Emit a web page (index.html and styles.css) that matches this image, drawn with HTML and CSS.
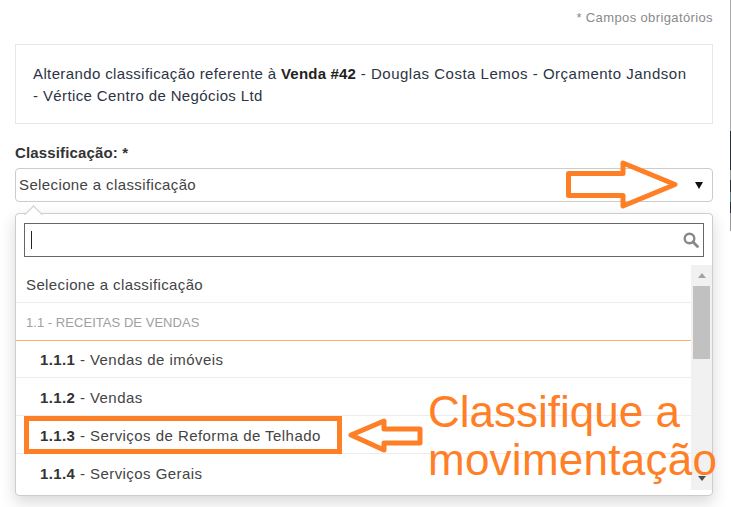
FILE: index.html
```html
<!DOCTYPE html>
<html lang="pt-BR">
<head>
<meta charset="utf-8">
<title>Alterar classificação</title>
<link rel="stylesheet" href="styles.css">
</head>
<body>
<main class="modal">
  <p class="required">* Campos obrigatórios</p>
  <div class="notice">Alterando classificação referente à <strong>Venda #42</strong><span class="notice-tail"> - Douglas Costa Lemos - Orçamento Jandson</span> - Vértice Centro de Negócios Ltd</div>
  <label class="field-label">Classificação: *</label>
  <div class="select">
    <span>Selecione a classificação</span>
    <span class="select-arrow"></span>
  </div>
  <div class="dropdown">
    <div class="search">
      <span class="cursor"></span>
      <svg class="search-icon" width="16" height="16" viewBox="0 0 16 16"><circle cx="6.5" cy="6.5" r="4.8" fill="none" stroke="#888" stroke-width="2.4"/><line x1="10" y1="10" x2="14.5" y2="14.5" stroke="#888" stroke-width="2.8" stroke-linecap="round"/></svg>
    </div>
    <div class="results">
      <ul class="rows">
        <li class="row">Selecione a classificação</li>
        <li class="row group">1.1 - RECEITAS DE VENDAS</li>
        <li class="row sub"><b>1.1.1</b> - Vendas de imóveis</li>
        <li class="row sub"><b>1.1.2</b> - Vendas</li>
        <li class="row sub"><b>1.1.3</b> - Serviços de Reforma de Telhado</li>
        <li class="row sub last"><b>1.1.4</b> - Serviços Gerais</li>
      </ul>
      <div class="scrollbar">
        <span class="tri-up"></span>
        <span class="thumb"></span>
        <span class="tri-down"></span>
      </div>
    </div>
  </div>
</main>
<div class="edge-strip"></div>
<svg class="arrows" width="731" height="507" viewBox="0 0 731 507">
  <polygon points="568.5,173.5 623,173.5 623,163 675,184.5 623,206 623,195.5 568.5,195.5"/>
  <polygon points="351,435 384,421 384,429 420,429 420,443 384,443 384,450"/>
  <rect class="box" x="26.5" y="418.5" width="313" height="33"/>
</svg>
<div class="annotation">Classifique a<br><span class="annotation-second">movimentação</span></div>
</body>
</html>
```
FILE: styles.css
```css
* { box-sizing: border-box; }
html, body { margin: 0; height: 100%; }
body {
  width: 731px;
  height: 507px;
  overflow: hidden;
  background: #fff;
  font-family: "Liberation Sans", Arial, sans-serif;
  font-size: 15px;
  letter-spacing: 0.38px;
  color: #333;
  position: relative;
}
.modal {
  width: 730px;
  height: 507px;
  padding: 0 17px 0 15px;
  overflow: hidden;
}
.required {
  margin: 0;
  height: 44px;
  padding-top: 10px;
  line-height: 15px;
  font-size: 13px;
  color: #8a8a8a;
  text-align: right;
}
.notice {
  height: 80px;
  padding: 18px 22px 18px 17px;
  border: 1px solid #e7e7e7;
  line-height: 22px;
  color: #2c3444;
}
.notice strong { color: #222; letter-spacing: 0.2px; }
.notice-tail { letter-spacing: 0.5px; }
.field-label {
  display: block;
  margin-top: 20px;
  height: 24px;
  line-height: 17px;
  font-weight: bold;
  letter-spacing: 0.15px;
  color: #333;
}
.select {
  height: 34px;
  display: flex;
  align-items: center;
  justify-content: space-between;
  padding: 0 9px 2px 3px;
  border: 1px solid #ccc;
  border-radius: 4px;
  color: #444;
}
.select-arrow {
  width: 0;
  height: 0;
  margin-top: 2px;
  border-left: 4.5px solid transparent;
  border-right: 4.5px solid transparent;
  border-top: 7px solid #111;
}
.dropdown {
  position: relative;
  margin-top: 11px;
  height: 283px;
  border: 1px solid #ccc;
  border-radius: 4px;
  background: #fff;
  box-shadow: 0 6px 16px rgba(0, 0, 0, 0.16);
  padding-top: 9px;
}
.dropdown::before {
  content: "";
  position: absolute;
  left: 11px;
  top: -6px;
  width: 12px;
  height: 12px;
  background: #fff;
  border-left: 1px solid #ccc;
  border-top: 1px solid #ccc;
  transform: rotate(45deg);
}
.search {
  position: relative;
  display: flex;
  align-items: center;
  justify-content: space-between;
  height: 34px;
  margin: 0 8px;
  padding: 0 4px 0 6px;
  border: 1px solid #666;
}
.cursor {
  width: 1px;
  height: 18px;
  background: #222;
}
.results {
  display: flex;
  margin-top: 8px;
  height: 225px;
}
.rows {
  flex: 1;
  margin: 0;
  padding: 0;
  list-style: none;
  color: #444;
}
.row {
  height: 38px;
  padding: 0 10px;
  line-height: 39px;
  border-bottom: 1px solid #ececec;
}
.group {
  font-size: 13px;
  letter-spacing: 0.04px;
  color: #a0a0a0;
  border-bottom-color: #ffb26e;
}
.sub { padding-left: 24px; letter-spacing: 0.45px; }
.group + .sub { height: 37px; line-height: 37px; }
.sub b { color: #333; letter-spacing: 0.38px; }
.last { border-bottom: 0; }
.scrollbar {
  width: 21px;
  display: flex;
  flex-direction: column;
  align-items: center;
  background: #f1f1f1;
  position: relative;
}
.tri-up {
  margin-top: 8px;
  width: 0;
  height: 0;
  border-left: 4.5px solid transparent;
  border-right: 4.5px solid transparent;
  border-bottom: 5px solid #a3a3a3;
}
.thumb {
  width: 17px;
  height: 73px;
  margin-top: 8px;
  background: #c1c1c1;
}
.tri-down {
  margin-top: auto;
  margin-bottom: 9px;
  width: 0;
  height: 0;
  border-left: 4.5px solid transparent;
  border-right: 4.5px solid transparent;
  border-top: 5px solid #505050;
}
.edge-strip {
  position: absolute;
  left: 730px;
  top: 0;
  width: 1px;
  height: 231px;
  background: linear-gradient(#aaa 0 131px, #2d2f36 131px 170px, #999 170px 180px, #2d2f36 180px 192px, #5f7f88 192px 202px, #2d2f36 202px 213px, #999 213px);
}
.arrows {
  position: absolute;
  left: 0;
  top: 0;
  pointer-events: none;
}
.arrows polygon {
  fill: none;
  stroke: #ff7f27;
  stroke-width: 5;
  stroke-linejoin: round;
}
.arrows .box {
  fill: none;
  stroke: #ff7f27;
  stroke-width: 5;
}
.annotation {
  position: absolute;
  left: 428px;
  top: 388px;
  font-size: 44px;
  line-height: 48px;
  letter-spacing: 0;
  color: #ff7f27;
  white-space: nowrap;
}
.annotation-second {
  letter-spacing: 0.25px;
}
```
